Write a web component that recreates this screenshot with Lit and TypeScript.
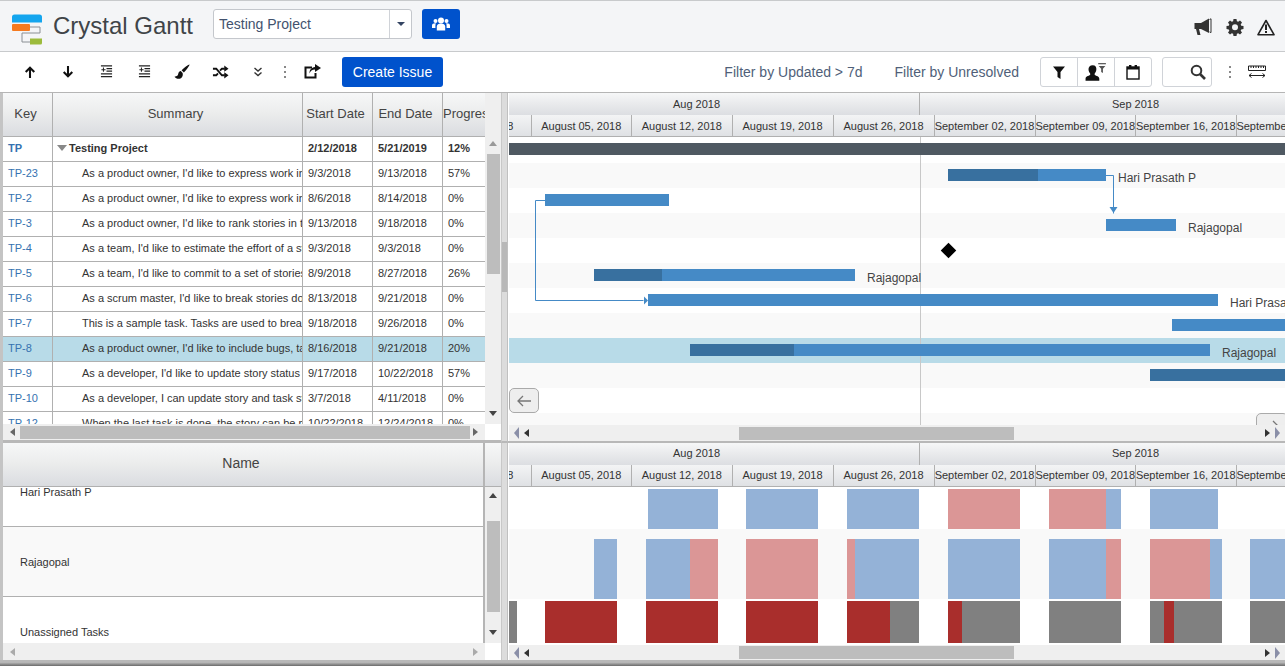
import { LitElement, html, css } from 'lit';
import { customElement } from 'lit/decorators.js';

const ICONS: Record<string, any> = {
  up: html`<svg width="12" height="12" viewBox="0 0 14 14"><path d="M7 14V2M2 7l5-5 5 5" fill="none" stroke="#111" stroke-width="2.4"/></svg>`,
  down: html`<svg width="12" height="12" viewBox="0 0 14 14"><path d="M7 0v12M2 7l5 5 5-5" fill="none" stroke="#111" stroke-width="2.4"/></svg>`,
  indent: html`<svg width="13" height="13" viewBox="0 0 14 14"><path d="M1 1h12M7 4h6M7 6.500h6M1 9.500h12M1 12.500h12" stroke="#222" stroke-width="1.3"/><path d="M1.500 5h4.500M3.700 2.800v4.400" stroke="#222" stroke-width="1.100"/></svg>`,
  brush: html`<svg width="16" height="16" viewBox="0 0 16 16"><path d="M15.500.5c.4.4-3.400 6-5.600 8L7.600 6.200C9.600 4 15.100.1 15.500.5z" fill="#111"/><path d="M6.800 7c-2.800.3-2.200 3.600-3.300 4.600C2.600 12.400 1.500 12.600.5 12.700c1.200 2 5.400 3.200 7.400.6 1-1.300 1.100-2.900.7-4.300z" fill="#111"/></svg>`,
  shuffle: html`<svg width="17" height="14" viewBox="0 0 18 14"><path d="M1 3.500h3.500l6 7h3M1 10.500h3.500l1.800-2.100M8.500 5.600l2-2.100h3" fill="none" stroke="#111" stroke-width="2"/><path d="M13 .2 17.500 3.500 13 6.800zM13 7.200l4.500 3.300-4.500 3.300z" fill="#111"/></svg>`,
  more: html`<svg width="10" height="10" viewBox="0 0 10 10"><path d="m1.500 1 3.500 3 3.500-3M1.500 5.500l3.500 3 3.500-3" fill="none" stroke="#333" stroke-width="1.400"/></svg>`,
  share: html`<svg width="17" height="15" viewBox="0 0 17 15"><path d="M8 3.500H1.500v10h10V9" fill="none" stroke="#111" stroke-width="2"/><path d="M11 0l6 4-6 4V5.500c-3 0-4.500 1.500-5.500 4 0-4 2-6 5.500-6.500z" fill="#111"/></svg>`,
  horn: html`<svg width="20" height="18" viewBox="0 0 20 18"><path d="M.5 5h6.500v6H5l1.500 6H3.500L2 11H.5z" fill="#333"/><path d="M7 5l8-4.500V15L7 11z" fill="#333"/><path d="M15.500 1.500 17 .8v13.800l-1.500-.7" fill="none" stroke="#333"/></svg>`,
  warn: html`<svg width="18" height="17" viewBox="0 0 18 17"><path d="M9 1.500 17 15.700H1z" fill="none" stroke="#222" stroke-width="1.600" stroke-linejoin="round"/><path d="M9 5.500v5.500M9 12v2" stroke="#222" stroke-width="2"/></svg>`,
  filter: html`<svg width="12" height="13" viewBox="0 0 12 13"><path d="M0 .5h12L7.500 6v7l-3-2V6z" fill="#111"/></svg>`,
  userf: html`<svg width="22" height="19" viewBox="0 0 20 17"><path d="M7 2c2.500 0 3.600 1.800 3.300 4.100-.2 1.500-.8 2.700-1.500 3.400v1.300c1.600.8 4.200 1.400 4.200 3.400V16H.5v-1.800c0-2 2.600-2.600 4.200-3.400V9.500C4 8.800 3.400 7.600 3.200 6.100 3 3.800 4.500 2 7 2z" fill="#111"/><path d="M12 .5h7" stroke="#444"/><path d="M12.500 2.500h6l-2.200 2.500V9l-1.600-1V5z" fill="#555"/></svg>`,
  cal: html`<svg width="14" height="16" viewBox="0 0 14 16"><rect x="1" y="3" width="12" height="12" fill="none" stroke="#111" stroke-width="1.400"/><rect x="1" y="3" width="12" height="2.500" fill="#111"/><rect x="3" y="1" width="2.400" height="3.500" fill="#111"/><rect x="8.600" y="1" width="2.400" height="3.500" fill="#111"/></svg>`,
  search: html`<svg width="16" height="16" viewBox="0 0 16 16"><circle cx="6.500" cy="6.500" r="4.800" fill="none" stroke="#333" stroke-width="2"/><path d="m10 10 5 5" stroke="#333" stroke-width="2.600"/></svg>`,
  ruler: html`<svg width="18" height="14" viewBox="0 0 18 14"><path d="M.5 1h17v4.500H.5z" fill="none" stroke="#222"/><path d="M3 1v2M5.500 1v2M8 1v2M10.500 1v2M13 1v2M15.500 1v2" stroke="#222"/><path d="M1 10.500h16" stroke="#222"/><path d="M3.500 8.500 1 10.500l2.500 2M14.500 8.500l2.500 2-2.500 2" fill="none" stroke="#222"/></svg>`,
};

const COG = html`<svg width="18" height="18" viewBox="0 0 18 18"><path fill="#333" fill-rule="evenodd" d="M7.500 1h3l.4 2.200 1.300.6L14 2.500l2 2.100-1.300 1.800.5 1.300 2.300.4v2.900l-2.300.4-.5 1.300 1.300 1.800-2 2.100-1.800-1.300-1.300.5-.4 2.300h-3l-.4-2.300-1.300-.5L4 16.600l-2-2.100 1.300-1.800-.5-1.300L.5 11V8.100l2.300-.4.5-1.300L2 4.600l2-2.100 1.800 1.300 1.300-.6zM9 6.300a3 3 0 1 0 0 6 3 3 0 0 0 0-6z"/></svg>`;

const ROWS = [
  ['TP', 'Testing Project', '2/12/2018', '5/21/2019', '12%'],
  ['TP-23', "As a product owner, I'd like to express work in terms of actual user needs", '9/3/2018', '9/13/2018', '57%'],
  ['TP-2', "As a product owner, I'd like to express work in terms of actual user needs", '8/6/2018', '8/14/2018', '0%'],
  ['TP-3', "As a product owner, I'd like to rank stories in the backlog so I can", '9/13/2018', '9/18/2018', '0%'],
  ['TP-4', "As a team, I'd like to estimate the effort of a story in story points", '9/3/2018', '9/3/2018', '0%'],
  ['TP-5', "As a team, I'd like to commit to a set of stories to be completed", '8/9/2018', '8/27/2018', '26%'],
  ['TP-6', "As a scrum master, I'd like to break stories down into tasks we can track", '8/13/2018', '9/21/2018', '0%'],
  ['TP-7', 'This is a sample task. Tasks are used to break down the steps', '9/18/2018', '9/26/2018', '0%'],
  ['TP-8', "As a product owner, I'd like to include bugs, tasks and other issue types", '8/16/2018', '9/21/2018', '20%'],
  ['TP-9', "As a developer, I'd like to update story status during the sprint", '9/17/2018', '10/22/2018', '57%'],
  ['TP-10', 'As a developer, I can update story and task status with drag and drop', '3/7/2018', '4/11/2018', '0%'],
  ['TP-12', 'When the last task is done, the story can be marked complete', '10/22/2018', '12/24/2018', '0%'],
];

// x values are page pixels, same as the timeline ruler
const BARS = [
  { row: 0, x: 509, end: 1285, done: 0, kind: 'summary' },
  { row: 1, x: 948, end: 1106, done: 1038, label: 'Hari Prasath P', lx: 1118 },
  { row: 2, x: 545, end: 669, done: 0 },
  { row: 3, x: 1106, end: 1176, done: 0, label: 'Rajagopal', lx: 1188 },
  { row: 5, x: 594, end: 855, done: 662, label: 'Rajagopal', lx: 867 },
  { row: 6, x: 648, end: 1218, done: 0, label: 'Hari Prasath P', lx: 1230 },
  { row: 7, x: 1172, end: 1290, done: 0 },
  { row: 8, x: 690, end: 1210, done: 794, label: 'Rajagopal', lx: 1222 },
  { row: 9, x: 1150, end: 1290, done: 1290 },
];

const LOAD = [
  { row: 0, c: 'b', s: [[648, 718], [746, 818], [847, 919], [1106, 1121], [1150, 1218]] },
  { row: 0, c: 'r', s: [[948, 1020], [1049, 1106]] },
  { row: 1, c: 'b', s: [[594, 617], [646, 690], [855, 919], [948, 1020], [1049, 1106], [1210, 1222], [1250, 1290]] },
  { row: 1, c: 'r', s: [[690, 718], [746, 818], [847, 855], [1106, 1121], [1150, 1210]] },
  { row: 2, c: 'd', s: [[545, 617], [646, 718], [746, 818], [847, 890], [948, 962], [1164, 1174]] },
  { row: 2, c: 'g', s: [[509, 517], [890, 919], [962, 1020], [1049, 1121], [1150, 1164], [1174, 1222], [1250, 1290]] },
];
const LOAD_ROWS = [
  { top: 2, h: 40 },
  { top: 52, h: 60 },
  { top: 114, h: 42 },
];

const WEEKS = ['July 29, 2018', 'August 05, 2018', 'August 12, 2018', 'August 19, 2018', 'August 26, 2018',
  'September 02, 2018', 'September 09, 2018', 'September 16, 2018', 'September 23, 2018'];

@customElement('app-root')
export class AppRoot extends LitElement {
  static styles = css`
    :host { display: block; width: 1285px; height: 666px; overflow: hidden; font-family: "Liberation Sans", Arial, sans-serif; color: #333; }
    .app { display: flex; flex-direction: column; height: 666px; box-sizing: border-box; border-top: 1px solid #c8cacc; background: #fff; }

    .head { flex: none; height: 51px; box-sizing: border-box; background: #f4f5f7; border-bottom: 1px solid #c8cacc; display: flex; align-items: center; padding-left: 12px; }
    .logo { display: block; margin-top: 7px; }
    .title { font-size: 24px; color: #404448; margin-left: 11px; width: 160px; white-space: nowrap; }
    .select { width: 199px; height: 30px; box-sizing: border-box; border: 1px solid #c4c7cc; border-radius: 3px; background: #fff; display: flex; align-items: center; margin-right: 10px; margin-bottom: 4px; }
    .select span { flex: 1; padding-left: 5px; font-size: 14px; color: #42526e; }
    .select i { width: 21px; height: 28px; border-left: 1px solid #d0d3d8; display: flex; align-items: center; justify-content: center; }
    .select i::after { content: ""; border: 4px solid transparent; border-top: 4px solid #344563; border-bottom: 0; }
    .team { width: 38px; height: 30px; border-radius: 3px; background: #0052cc; display: flex; align-items: center; justify-content: center; margin-bottom: 4px; }
    .head-right { margin-left: auto; display: flex; align-items: center; gap: 11px; padding-right: 9px; margin-top: 2px; }
    .head-right span { display: flex; width: 20px; justify-content: center; }

    .tools { flex: none; height: 41px; box-sizing: border-box; display: flex; align-items: center; padding-left: 11px; border-bottom: 1px solid #b5b5b5; }
    .tool { width: 38px; display: flex; justify-content: center; align-items: center; margin-bottom: 1px; }
    .dots { width: 16px; display: flex; flex-direction: column; align-items: center; gap: 3px; }
    .dots b { width: 2px; height: 2px; background: #888; }
    .create { margin-left: 11px; width: 101px; height: 30px; border-radius: 3px; background: #0052cc; color: #fff; font-size: 14px; display: flex; align-items: center; justify-content: center; }
    .tools-right { margin-left: auto; display: flex; align-items: center; padding-right: 19px; }
    .flt { font-size: 14px; color: #505f79; margin-right: 32px; white-space: nowrap; }
    .flt.last { margin-right: 21px; }
    .group { display: flex; height: 30px; box-sizing: border-box; border: 1px solid #d0d3d8; border-radius: 3px; }
    .group span { width: 36px; display: flex; align-items: center; justify-content: center; border-left: 1px solid #d0d3d8; }
    .group span:first-child { border-left: 0; }
    .find { margin-left: 10px; width: 50px; height: 30px; box-sizing: border-box; border: 1px solid #d0d3d8; border-radius: 3px; display: flex; align-items: center; justify-content: flex-end; padding-right: 5px; }
    .tools-right .dots { margin-left: 10px; width: 16px; }
    .tools-right .ruler { margin-left: 10px; display: flex; }

    .panes { flex: 1; min-height: 0; display: grid; grid-template-columns: 498px 7px 1fr; grid-template-rows: 350px 217px; border-left: 3px solid #c4c4c4; }
    .left { display: grid; grid-template-columns: 482px 16px; min-height: 0; min-width: 0; }
    .top-left { grid-template-rows: 331px 16px; border-bottom: 3px solid #b8b8b8; }
    .bot-left { grid-template-rows: 44px 156px 17px; }
    .split { box-sizing: border-box; background: #dcdcdc; border-left: 1px solid #c8c8c8; border-right: 1px solid #c0c0c0; display: flex; flex-direction: column; }
    .split.top { border-bottom: 2px solid #b8b8b8; }
    .split u { display: block; height: 50px; margin-top: 149px; background: #b8b8b8; }

    .table { overflow: hidden; min-width: 0; display: grid; grid-template-columns: 50px 250px 70px 70px 42px; grid-template-rows: 44px; grid-auto-rows: 25px; font-size: 11px; }
    .th { height: 44px; box-sizing: border-box; padding: 0 4px 2px 0; background: linear-gradient(#f6f7f8, #eceded 45%, #dadce0); border-right: 1px solid #b0b0b0; border-bottom: 1px solid #b0b0b0; font-size: 13px; color: #444; display: flex; align-items: center; justify-content: center; white-space: nowrap; overflow: hidden; }
    .th.last { border-right: 0; justify-content: flex-start; padding-right: 0; }
    .td { box-sizing: border-box; height: 25px; line-height: 23px; border-right: 1px solid #b0b0b0; border-bottom: 1px solid #b0b0b0; padding-left: 5px; white-space: nowrap; overflow: hidden; color: #333; }
    .td.last { border-right: 0; }
    .td.key { color: #3572b0; }
    .td.sum { padding-left: 29px; }
    .td.bold { font-weight: bold; line-height: 22px; }
    .td.root { padding: 0 0 2px 4px; display: flex; align-items: center; gap: 2px; }
    .td.root i { border: 5px solid transparent; border-top: 6px solid #888; border-bottom: 0; }
    .td.on { background: #b8dbe8; }

    .sb { background: #efefef; display: flex; }
    .sb.v { flex-direction: column; align-items: center; }
    .sb.h { align-items: center; }
    .corner { background: #fff; }
    .thumb { background: #bdbdbd; flex: none; }
    .arrow { flex: none; width: 0; height: 0; border: 4px solid transparent; }
    .arrow.u { border-bottom: 5px solid #999; border-top: 0; }
    .arrow.d { border-top: 5px solid #444; border-bottom: 0; }
    .arrow.l { border-right: 5px solid #666; border-left: 0; }
    .arrow.ld { border-right: 5px solid #333; border-left: 0; }
    .arrow.lb { border-right: 5px solid #8a8fa8; border-left: 0; border-top-width: 6px; border-bottom-width: 6px; }
    .arrow.r { border-left: 5px solid #666; border-right: 0; }
    .arrow.rd { border-left: 5px solid #333; border-right: 0; }
    .arrow.rb { border-left: 5px solid #8a8fa8; border-right: 0; border-top-width: 6px; border-bottom-width: 6px; }
    .arrow.rl { border-left: 5px solid #aaa; border-right: 0; }

    .name-th { background: linear-gradient(#f6f7f8, #eceded 45%, #dadce0); border-bottom: 1px solid #b0b0b0; border-right: 2px solid #b5b5b5; display: flex; align-items: center; justify-content: center; padding: 0 4px 4px 0; font-size: 14px; color: #444; box-sizing: border-box; }
    .head-fill { background: linear-gradient(#f6f7f8, #eceded 45%, #dadce0); border-bottom: 1px solid #b0b0b0; }
    .names { overflow: hidden; border-right: 2px solid #b5b5b5; font-size: 11px; box-sizing: border-box; }
    .name { height: 70px; box-sizing: border-box; border-bottom: 1px solid #b0b0b0; padding-left: 17px; display: flex; align-items: center; color: #333; }
    .name.first { margin-top: -30px; }
    .name.odd { background: #f9f9f9; }

    .right { display: flex; flex-direction: column; min-width: 0; min-height: 0; padding-left: 1px; overflow: hidden; }
    .right.top { border-bottom: 2px solid #b8b8b8; }
    .months, .weeks { flex: none; height: 22px; box-sizing: border-box; display: flex; overflow: hidden; font-size: 11px; white-space: nowrap; }
    .months { background: linear-gradient(#f6f7f8, #e9eaec 50%, #dcdee2); }
    .weeks { background: linear-gradient(#f3f4f5, #dfe1e4); border-bottom: 1px solid #b0b0b0; }
    .months div, .weeks div { flex: none; box-sizing: border-box; border-right: 1px solid #b0b0b0; display: flex; align-items: center; justify-content: center; overflow: hidden; color: #333; }
    .right.low .months div, .right.low .weeks div { padding-bottom: 2px; }
    .chart { flex: 1; min-height: 0; position: relative; overflow: hidden; }
    .chart.upper { padding-top: 1px; }
    .grid-line { position: absolute; top: 0; bottom: 0; width: 1px; background: #c8c8c8; z-index: 1; }
    .row { height: 25px; position: relative; }
    .row.odd { background: #f9f9f9; }
    .row.on { background: #b8dbe8; }
    .bar { position: absolute; height: 12px; top: 6px; background: #458ac6; z-index: 2; }
    .bar.summary { background: #4f5962; top: 5px; }
    .bar b { display: block; height: 100%; background: #38709f; }
    .lbl { position: absolute; top: 8px; font-size: 12px; color: #444; white-space: nowrap; line-height: 14px; z-index: 2; }
    .links { position: absolute; left: 0; top: 0; z-index: 2; }
    .diamond { position: absolute; left: 434px; top: 108px; width: 11px; height: 11px; background: #000; transform: rotate(45deg); z-index: 2; }
    .nav { position: absolute; box-sizing: border-box; background: #eee; border: 1px solid #aaa; border-radius: 5px; display: flex; align-items: center; justify-content: center; z-index: 3; }
    .nav.back { left: 0; top: 251px; width: 30px; height: 25px; }
    .nav.next { left: 747px; top: 276px; width: 32px; height: 25px; }
    .gap { flex: none; height: 2px; background: #fff; }
    .hs { flex: none; height: 15px; padding: 0 4px; }
    .right.top .hs { height: 16px; }
    .load-row { position: absolute; left: 0; right: 0; }
    .load-row.odd { background: #f9f9f9; }
    .seg { position: absolute; top: 0; bottom: 0; }
    .seg.b { background: #94b2d7; }
    .seg.r { background: #db9696; }
    .seg.d { background: #a92e2c; }
    .seg.g { background: #808080; }

    .foot { flex: none; height: 6px; background: linear-gradient(#b8b8b8 40%, #6a6a6a); }
  `;

  private timeHead() {
    return html`
      <div class="months">
        <div style="width:446px;margin-left:-35px">Aug 2018</div>
        <div style="width:432px">Sep 2018</div>
      </div>
      <div class="weeks">
        ${WEEKS.map((w, i) => html`<div style="width:${i == 3 || i == 4 || i == 5 ? 101 : 100.5}px;margin-left:${i == 0 ? -78 : 0}px">${w}</div>`)}
      </div>`;
  }

  private hscroll() {
    return html`
      <div class="sb h hs">
        <span class="arrow lb" style="margin-left:1px"></span>
        <span class="arrow ld" style="margin-left:5px"></span>
        <span class="thumb" style="width:275px;height:13px;margin-left:210px"></span>
        <span class="arrow rd" style="margin-left:auto"></span>
        <span class="arrow rb" style="margin-left:5px;margin-right:1px"></span>
      </div>`;
  }

  private upperChart() {
    const rows = Array.from({ length: 12 }, (_, i) => i);
    return html`
      <div class="chart upper">
        ${rows.map(i => html`<div class="row ${i == 8 ? 'on' : i % 2 ? 'odd' : ''}">
          ${BARS.filter(b => b.row == i).map(b => html`
            <div class="bar ${b.kind || ''}" style="left:${b.x - 509}px;width:${b.end - b.x}px">
              ${b.done ? html`<b style="width:${b.done - b.x}px"></b>` : ''}
            </div>
            ${b.label ? html`<span class="lbl" style="left:${(b.lx as number) - 509}px">${b.label}</span>` : ''}`)}
        </div>`)}
        <div class="grid-line" style="left:411px"></div>
        <div class="diamond"></div>
        <svg class="links" width="776" height="288" viewBox="0 0 776 288">
          <path d="M597 38.500h7.500v38" fill="none" stroke="#458ac6"/>
          <path d="M600.500 70h8l-4 6z" fill="#458ac6"/>
          <path d="M36 63.500h-9.500v100h108" fill="none" stroke="#458ac6"/>
          <path d="M135 159.500l4 4-4 4z" fill="#458ac6"/>
        </svg>
        <div class="nav back"><svg width="16" height="12" viewBox="0 0 16 12"><path d="M15 6H2M7 1 2 6l5 5" fill="none" stroke="#777" stroke-width="1.300"/></svg></div>
        <div class="nav next"><svg width="16" height="12" viewBox="0 0 16 12"><path d="M1 6h13M9 1l5 5-5 5" fill="none" stroke="#777" stroke-width="1.300"/></svg></div>
      </div>`;
  }

  private lowerChart() {
    return html`
      <div class="chart">
        <div class="load-row odd" style="top:42px;height:70px"></div>
        ${LOAD.map(l => html`
          <div class="load-row" style="top:${LOAD_ROWS[l.row].top}px;height:${LOAD_ROWS[l.row].h}px">
            ${l.s.map(s => html`<div class="seg ${l.c}" style="left:${s[0] - 509}px;width:${s[1] - s[0]}px"></div>`)}
          </div>`)}
      </div>`;
  }

  render() {
    const icon = (n: string) => html`<span class="tool">${ICONS[n]}</span>`;
    return html`
      <div class="app">
        <div class="head">
          <svg class="logo" width="30" height="31" viewBox="0 0 30 31">
            <path d="M0 3a2.500 2.500 0 0 1 2.500-2.500h25A2.500 2.500 0 0 1 30 3v5.500H0z" fill="#14a5ee"/>
            <rect y="10" width="18" height="7" rx="1" fill="#f57a20"/>
            <path d="M18 13h10v6H10v9h8" fill="none" stroke="#8a8f94"/>
            <path d="M18 24.500h12V29a1.500 1.500 0 0 1-1.500 1.500H18z" fill="#9cbb3c"/>
          </svg>
          <span class="title">Crystal Gantt</span>
          <div class="select"><span>Testing Project</span><i></i></div>
          <div class="team">
            <svg width="18" height="14" viewBox="0 0 18 14"><g fill="#fff"><circle cx="9" cy="3.500" r="3"/><path d="M4.800 13.500V9.500c0-2 1.800-3 4.200-3s4.200 1 4.200 3v4z"/><circle cx="3.500" cy="4" r="2"/><path d="M0 11V8.500c0-1.500 1.200-2.300 3.500-2.300l.4.100c-.5.800-.5 2-.5 4.700z"/><circle cx="14.500" cy="4" r="2"/><path d="M18 11V8.500c0-1.500-1.200-2.300-3.500-2.300l-.4.100c.5.800.5 2 .5 4.700z"/></g></svg>
          </div>
          <div class="head-right"><span>${ICONS.horn}</span><span>${COG}</span><span>${ICONS.warn}</span></div>
        </div>

        <div class="tools">
          ${icon('up')}${icon('down')}${icon('indent')}${icon('indent')}${icon('brush')}${icon('shuffle')}${icon('more')}
          <span class="dots"><b></b><b></b><b></b></span>
          ${icon('share')}
          <div class="create">Create Issue</div>
          <div class="tools-right">
            <span class="flt">Filter by Updated &gt; 7d</span>
            <span class="flt last">Filter by Unresolved</span>
            <div class="group"><span>${ICONS.filter}</span><span>${ICONS.userf}</span><span>${ICONS.cal}</span></div>
            <div class="find">${ICONS.search}</div>
            <span class="dots"><b></b><b></b><b></b></span>
            <span class="ruler">${ICONS.ruler}</span>
          </div>
        </div>

        <div class="panes">
          <div class="left top-left">
            <div class="table">
              <div class="th">Key</div><div class="th">Summary</div><div class="th">Start Date</div><div class="th">End Date</div><div class="th last">Progress</div>
              ${ROWS.map((r, i) => html`
                <div class="td key ${i == 8 ? 'on' : ''} ${i == 0 ? 'bold' : ''}">${r[0]}</div>
                ${i == 0
                  ? html`<div class="td root bold"><i></i>${r[1]}</div>`
                  : html`<div class="td sum ${i == 8 ? 'on' : ''}">${r[1]}</div>`}
                <div class="td ${i == 8 ? 'on' : ''} ${i == 0 ? 'bold' : ''}">${r[2]}</div>
                <div class="td ${i == 8 ? 'on' : ''} ${i == 0 ? 'bold' : ''}">${r[3]}</div>
                <div class="td last ${i == 8 ? 'on' : ''} ${i == 0 ? 'bold' : ''}">${r[4]}</div>`)}
            </div>
            <div class="sb v">
              <span class="arrow u" style="margin-top:48px"></span>
              <span class="thumb" style="width:13px;height:120px;margin-top:8px"></span>
              <span class="arrow d" style="margin-top:auto;margin-bottom:8px"></span>
            </div>
            <div class="sb h">
              <span class="arrow l" style="margin-left:7px"></span>
              <span class="thumb" style="width:450px;height:13px;margin-left:5px"></span>
              <span class="arrow r" style="margin-left:auto;margin-right:7px"></span>
            </div>
            <div class="corner"></div>
          </div>
          <div class="split top"><u></u></div>
          <div class="right top">${this.timeHead()}${this.upperChart()}${this.hscroll()}</div>

          <div class="left bot-left">
            <div class="name-th">Name</div>
            <div class="head-fill"></div>
            <div class="names">
              <div class="name first">Hari Prasath P</div>
              <div class="name odd">Rajagopal</div>
              <div class="name">Unassigned Tasks</div>
            </div>
            <div class="sb v">
              <span class="arrow u" style="margin-top:6px;border-bottom-color:#444"></span>
              <span class="thumb" style="width:13px;height:91px;margin-top:23px"></span>
              <span class="arrow d" style="margin-top:auto;margin-bottom:8px"></span>
            </div>
            <div class="sb h">
              <span class="arrow l" style="margin-left:7px;border-right-color:#aaa"></span>
              <span class="arrow rl" style="margin-left:auto;margin-right:7px"></span>
            </div>
            <div class="corner"></div>
          </div>
          <div class="split"></div>
          <div class="right low">
            ${this.timeHead()}${this.lowerChart()}<div class="gap"></div>${this.hscroll()}
          </div>
        </div>
        <div class="foot"></div>
      </div>`;
  }
}
